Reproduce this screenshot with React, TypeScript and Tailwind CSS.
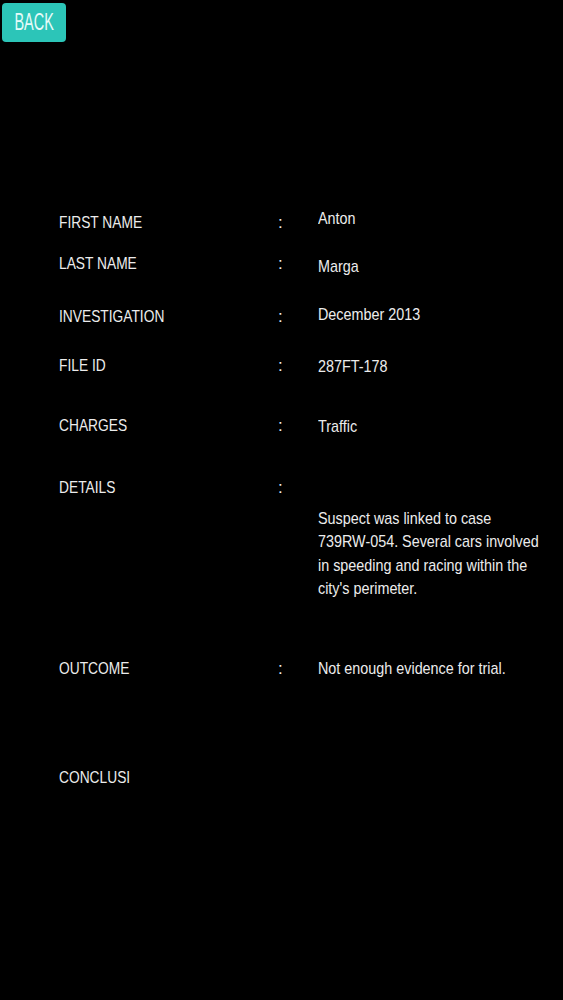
import React from 'react';

const font = { fontFamily: '"Liberation Sans", Arial, sans-serif' };

interface Row {
  label: string;
  value?: string;
  gap: string;
  shift: string;
}

const rows: Row[] = [
  { label: 'FIRST NAME', value: 'Anton', gap: 'mt-0', shift: '-translate-y-[4px]' },
  { label: 'LAST NAME', value: 'Marga', gap: 'mt-[18px]', shift: 'translate-y-[3px]' },
  { label: 'INVESTIGATION', value: 'December 2013', gap: 'mt-[30px]', shift: '-translate-y-[2px]' },
  { label: 'FILE ID', value: '287FT-178', gap: 'mt-[26px]', shift: 'translate-y-[1px]' },
  { label: 'CHARGES', value: 'Traffic', gap: 'mt-[37px]', shift: 'translate-y-[1px]' },
  { label: 'DETAILS', gap: 'mt-[39px]', shift: '' },
];

const Label: React.FC<{ children: React.ReactNode }> = ({ children }) => (
  <span className="inline-block origin-left scale-x-[0.81] whitespace-nowrap">{children}</span>
);

const Value: React.FC<{ children: React.ReactNode }> = ({ children }) => (
  <span className="inline-block origin-left scale-x-[0.845] whitespace-nowrap">{children}</span>
);

export default function App() {
  return (
    <div className="min-h-screen w-full bg-black text-[#ececec]" style={font}>
      <div className="pt-[3px] pl-[2px]">
        <button className="flex h-[39px] w-[64px] items-center justify-center rounded-[4px] bg-[#2cc5b8] text-[23px] leading-none text-[#e6fbf9]">
          <span className="inline-block scale-x-[0.63] pl-[1px]">BACK</span>
        </button>
      </div>

      <div className="mt-[169px] pl-[59px] text-[17px] leading-[23px]">
        {rows.map((r) => (
          <div key={r.label} className={`flex ${r.gap}`}>
            <div className="w-[219px]"><Label>{r.label}</Label></div>
            <div className="w-[40px]">:</div>
            <div className={`flex-1 ${r.shift}`}>{r.value && <Value>{r.value}</Value>}</div>
          </div>
        ))}

        <div className="mt-[8px] pl-[259px] leading-[23.3px]">
          <Value>
            Suspect was linked to case
            <br />
            739RW-054. Several cars involved
            <br />
            in speeding and racing within the
            <br />
            city's perimeter.
          </Value>
        </div>

        <div className="mt-[57px] flex">
          <div className="w-[219px]"><Label>OUTCOME</Label></div>
          <div className="w-[40px]">:</div>
          <div className="flex-1"><Value>Not enough evidence for trial.</Value></div>
        </div>

        <div className="mt-[86px]"><Label>CONCLUSI</Label></div>
      </div>
    </div>
  );
}
